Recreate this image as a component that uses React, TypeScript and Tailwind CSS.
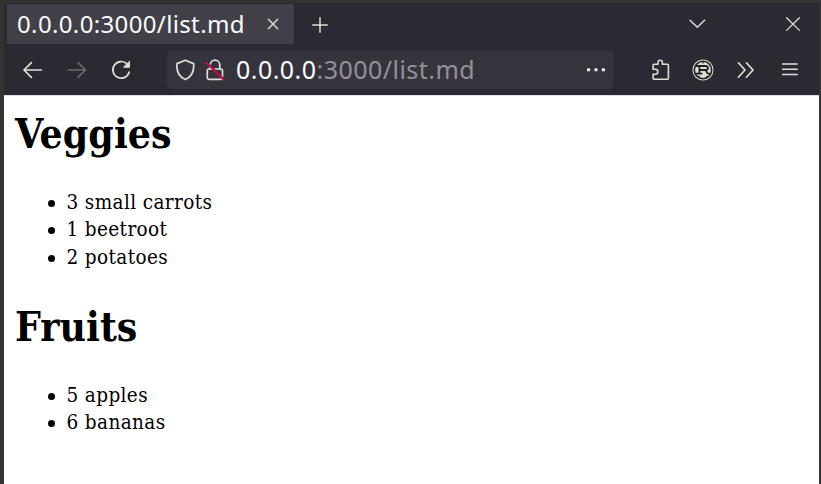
import React from 'react';

type Section = { title: string; items: string[] };

const sans = "font-['Noto_Sans','Open_Sans',sans-serif]";
const serif = "font-['DejaVu_Serif_Condensed','DejaVu_Serif','Noto_Serif',serif]";

const icon = {
  fill: 'none',
  stroke: '#deded9',
  strokeWidth: 1.7,
  strokeLinecap: 'round' as const,
  strokeLinejoin: 'round' as const,
};

function TabBar() {
  return (
    <div className="flex h-[42px] items-start pl-[3px] pt-px">
      <div className="flex h-10 w-[287px] items-center bg-[#414048] pl-[10px]">
        <span className="w-[227px] whitespace-nowrap text-[24px] leading-10 tracking-[0.36px] text-[#fbfbfe]">
          0.0.0.0:3000/list.md
        </span>
        <svg className="ml-[23px]" width="12" height="12" viewBox="0 0 12 12" {...icon} strokeWidth={1.4}>
          <path d="M1.3 1.3 10.7 10.7M10.7 1.3 1.3 10.7" />
        </svg>
      </div>
      <svg className="ml-[18px] mt-[13px]" width="16" height="16" viewBox="0 0 16 16" {...icon} strokeWidth={1.5}>
        <path d="M8 .8v14.4M.8 8h14.4" />
      </svg>
      <svg className="ml-[360px] mt-[14px]" width="18" height="12" viewBox="0 0 18 12" {...icon} strokeWidth={1.5}>
        <path d="m2 2.3 7.3 7 7.3-7" />
      </svg>
      <svg className="ml-[79px] mt-[12px]" width="16" height="16" viewBox="0 0 16 16" {...icon} strokeWidth={1.3}>
        <path d="m1.6 1.8 12.8 12.6M14.4 1.8 1.6 14.4" />
      </svg>
    </div>
  );
}

function AddressBar() {
  return (
    <div className="ml-[34px] flex h-[39px] w-[447px] items-center rounded-[5px] bg-[#35343d] pl-2">
      <svg width="21" height="22" viewBox="0 0 21 22" {...icon}>
        <path d="M10.3 1.3 18.6 4.6C19.3 11.3 17 17.5 10.3 20.6 3.6 17.5 1.3 11.3 2 4.6Z" />
      </svg>
      <svg className="ml-[9px]" width="20" height="22" viewBox="0 0 20 22" {...icon}>
        <path d="M5.2 10V6a4.8 4.8 0 0 1 9.6 0v4" />
        <rect x="2.3" y="10" width="15.2" height="10.4" rx="1.8" />
        <path d="m2.2 3.2 17 17" stroke="#35343d" strokeWidth="1.4" />
        <path d="m1.3 3.6 17 17" stroke="#ea0040" strokeWidth="1.8" />
      </svg>
      <span className="ml-[11px] w-[240px] whitespace-nowrap text-[25px] leading-[39px] tracking-[0.46px] text-[#929197]">
        <span className="text-[#fbfbfe]">0.0.0.0</span>:3000/list.md
      </span>
      <svg className="ml-[110px]" width="20" height="6" viewBox="0 0 20 6" fill="#eeeeea">
        <rect x="1" y="1.2" width="3.1" height="3.1" rx=".6" />
        <rect x="8.4" y="1.2" width="3.1" height="3.1" rx=".6" />
        <rect x="15.8" y="1.2" width="3.1" height="3.1" rx=".6" />
      </svg>
    </div>
  );
}

function RustBadge() {
  return (
    <svg className="ml-[21px]" width="22" height="22" viewBox="0 0 22 22">
      <circle cx="11" cy="11" r="10.5" fill="#deded9" />
      <circle cx="11" cy="11" r="8.7" fill="none" stroke="#22211f" strokeWidth="1.6" />
      <path
        d="M4 7h9.4q2.6 0 2.6 2t-2.6 2H8M7.4 7v7.6M3.4 14.6h7M12.6 11q2 .3 2.1 2 .1 1.6 1.8 1.6h2"
        fill="none"
        stroke="#22211f"
        strokeWidth="1.8"
      />
      <path d="M7 16.8v1.6M15 16.8v1.6M11 2v2.4" stroke="#22211f" strokeWidth="1.3" />
    </svg>
  );
}

function NavBar() {
  return (
    <div className="flex h-[50px] items-center pl-[18px] pb-px">
      <svg width="22" height="18" viewBox="0 0 22 18" {...icon}>
        <path d="M19.3 9H2M9.4 1.6 2 9l7.4 7.4" />
      </svg>
      <svg className="ml-[23px]" width="22" height="18" viewBox="0 0 22 18" {...icon} stroke="#6b6a70">
        <path d="M1.2 9h17.3M11.1 1.6 18.5 9l-7.4 7.4" />
      </svg>
      <svg className="ml-[22px]" width="22" height="20" viewBox="0 0 22 20" {...icon}>
        <path d="M18.2 12A8.3 8.3 0 1 1 16.2 4.1" />
        <path d="M18.5 1.6v5.6h-5.6Z" fill="#deded9" strokeWidth="1" />
      </svg>
      <AddressBar />
      <svg className="ml-[37px]" width="20" height="22" viewBox="0 0 20 22" {...icon} strokeWidth={1.6}>
        <path d="M2.1 9V6.2q0-.9.9-.9h4V3.5a2.2 2.2 0 0 1 4.4 0v1.8h5q1 0 1 1v13q0 1-1 1H3q-.9 0-.9-1v-4h2.2a2.4 2.4 0 0 0 0-5H2.1Z" />
      </svg>
      <RustBadge />
      <svg className="ml-[22px]" width="20" height="18" viewBox="0 0 20 18" {...icon}>
        <path d="M2.4 1.8 9 9l-6.6 7.2M10.4 1.8 17 9l-6.6 7.2" />
      </svg>
      <svg className="ml-[25px]" width="18" height="14" viewBox="0 0 18 14" {...icon} strokeWidth={1.5}>
        <path d="M1.6 1h14.6M1.6 6.3h14.6M1.6 11.5h14.6" />
      </svg>
    </div>
  );
}

const sections: Section[] = [
  { title: 'Veggies', items: ['3 small carrots', '1 beetroot', '2 potatoes'] },
  { title: 'Fruits', items: ['5 apples', '6 bananas'] },
];

function ListSection({ title, items }: Section) {
  return (
    <section className="mb-[28px]">
      <h1 className="h-[56px] whitespace-nowrap text-[40.5px] font-bold leading-[56px] tracking-[0.05px]">{title}</h1>
      <ul className="mt-[27px]">
        {items.map((item) => (
          <li key={item} className="flex h-[27.3px] items-center whitespace-nowrap pl-[33px] text-[20.5px] leading-[27.3px] tracking-[0.38px]">
            <span className="mr-[11.5px] mt-[2px] size-[7px] rounded-full bg-black" />
            {item}
          </li>
        ))}
      </ul>
    </section>
  );
}

export default function App() {
  return (
    <div className="h-[484px] w-[821px] overflow-hidden bg-[#333331] pl-1 pr-0.5 pt-[3px]">
      <header className={`h-[92px] bg-[#2b2a33] ${sans}`}>
        <TabBar />
        <NavBar />
      </header>
      <main className={`h-[389px] border-t border-[#e0e0e1] bg-white pl-[11px] pt-[10px] text-black ${serif}`}>
        {sections.map((section) => (
          <ListSection key={section.title} {...section} />
        ))}
      </main>
    </div>
  );
}
